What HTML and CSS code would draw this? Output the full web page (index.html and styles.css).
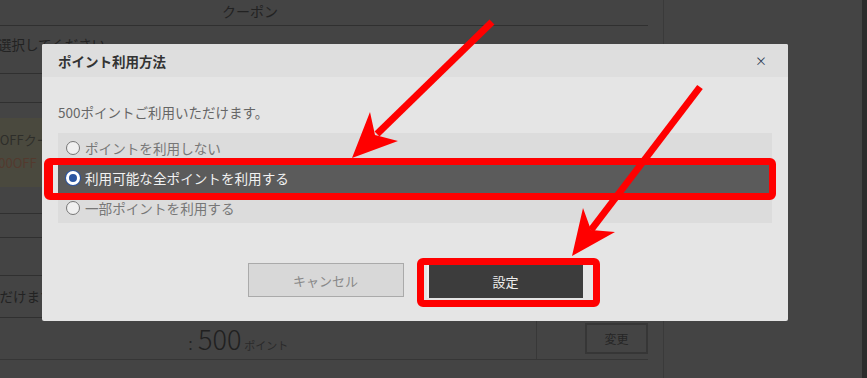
FILE: index.html
```html
<!DOCTYPE html>
<html lang="ja">
<head>
    <meta charset="UTF-8">
    <title>ポイント利用方法</title>
    <link rel="stylesheet" href="styles.css">
</head>
<body>
<div class="page">
    <div class="main">
        <div class="row row-title">クーポン</div>
        <div class="row row-select">選択してください</div>
        <div class="row row-empty"></div>
        <div class="coupon">
            <div class="coupon-name">500OFFクーポン</div>
            <div class="coupon-price">500OFF</div>
        </div>
        <div class="row row-a"></div>
        <div class="row row-b"></div>
        <div class="row row-c"></div>
        <div class="row row-note">ご利用いただけます</div>
        <div class="points">
            <div class="points-box">
                <span class="points-colon">：</span>
                <span class="points-num">500</span>
                <span class="points-unit">ポイント</span>
            </div>
            <button class="btn-change">変更</button>
        </div>
    </div>
    <div class="side"></div>
    <div class="edge"></div>
</div>

<div class="modal">
    <div class="modal-head">
        <span class="modal-title">ポイント利用方法</span>
        <span class="modal-close">×</span>
    </div>
    <div class="modal-body">
        <p class="modal-text">500ポイントご利用いただけます。</p>
        <ul class="options">
            <li class="option"><span class="radio"></span>ポイントを利用しない</li>
            <li class="option selected"><span class="radio checked"></span>利用可能な全ポイントを利用する</li>
            <li class="option"><span class="radio"></span>一部ポイントを利用する</li>
        </ul>
        <div class="buttons">
            <button class="btn btn-cancel">キャンセル</button>
            <button class="btn btn-ok">設定</button>
        </div>
    </div>
</div>

<div class="mark mark-option"></div>
<div class="mark mark-ok"></div>

<svg class="arrows" width="867" height="378" viewBox="0 0 867 378">
    <line x1="492" y1="22" x2="377" y2="134" stroke="#ff0000" stroke-width="7"/>
    <polygon points="352,158 398,141 375,135 370,112" fill="#ff0000"/>
    <line x1="700" y1="87" x2="591" y2="230" stroke="#ff0000" stroke-width="7"/>
    <polygon points="572,256 615,232 591,230 583,208" fill="#ff0000"/>
</svg>
</body>
</html>
```

FILE: styles.css
```css
body {
    margin: 0;
    font-family: "Noto Sans CJK JP", "Noto Sans", sans-serif;
    background: #444;
    overflow: hidden;
}

.page {
    display: flex;
    height: 378px;
    background: #444;
    color: #222;
    font-size: 13px;
}

.main {
    width: 648px;
    margin-right: 15px;
}

.row {
    border-bottom: 1px solid #303030;
    box-sizing: border-box;
}

.row-title {
    height: 26px;
    padding-left: 222px;
    font-size: 14px;
    line-height: 22px;
}

.row-select {
    height: 48px;
    padding-top: 8px;
    font-size: 13.5px;
    text-indent: -2px;
}

.row-empty {
    height: 29px;
    margin-bottom: 15px;
}

.coupon {
    height: 69px;
    background: #4a493e;
    padding-top: 12px;
    box-sizing: border-box;
    overflow: hidden;
    white-space: nowrap;
}

.coupon-name {
    margin-left: -22px;
    color: #2e2e2a;
}

.coupon-price {
    margin-left: -9px;
    margin-top: 4px;
    color: #533a2e;
}

.row-a {
    height: 27px;
}

.row-b {
    height: 24px;
}

.row-c {
    height: 38px;
}

.row-note {
    height: 42px;
    white-space: nowrap;
    text-indent: -68px;
    font-size: 13.5px;
    line-height: 40px;
    overflow: hidden;
}

.points {
    display: flex;
    align-items: flex-start;
    height: 41px;
    border-bottom: 1px solid #363636;
}

.points-box {
    width: 537px;
    height: 41px;
    box-sizing: border-box;
    border-right: 1px solid #383838;
    padding-left: 184px;
    display: flex;
    align-items: baseline;
    padding-top: 1px;
}

.points-colon {
    font-size: 13px;
}

.points-num {
    font-size: 27px;
    font-weight: 300;
    margin-left: 1px;
    color: #202020;
}

.points-unit {
    font-size: 11px;
    margin-left: 3px;
    color: #2a2a2a;
}

.btn-change {
    margin-left: 48px;
    margin-top: 5px;
    width: 63px;
    height: 31px;
    background: #444;
    border: 2px solid #363636;
    color: #262626;
    font-family: inherit;
    font-size: 12px;
}

.side {
    flex: 1;
    border-left: 1px solid #3a3a3a;
}

.edge {
    width: 5px;
    background: #2c2c2c;
}

.modal {
    position: absolute;
    left: 42px;
    top: 44px;
    width: 746px;
    height: 277px;
    background: #e5e5e5;
    border-radius: 2px;
    overflow: hidden;
}

.modal-head {
    height: 33px;
    background: #dedede;
    display: flex;
    align-items: center;
    justify-content: space-between;
    padding: 0 21px 0 16px;
}

.modal-title {
    font-size: 13.5px;
    font-weight: bold;
    color: #333;
}

.modal-close {
    font-size: 12px;
    color: #2b3a55;
}

.modal-body {
    padding: 25px 16px 0;
}

.modal-text {
    margin: 0;
    font-size: 13.5px;
    line-height: 20px;
    color: #666;
}

.options {
    list-style: none;
    margin: 11px 0 0;
    padding: 0;
    background: #dcdcdc;
}

.option {
    display: flex;
    align-items: center;
    height: 30px;
    padding-left: 8px;
    font-size: 13.6px;
    color: #777;
}

.option.selected {
    background: #5b5b5b;
    color: #f2f2f2;
}

.radio {
    width: 12px;
    height: 12px;
    border: 1px solid #777;
    border-radius: 50%;
    background: #f0f0f0;
    margin-right: 5px;
    box-sizing: content-box;
}

.radio.checked {
    width: 8px;
    height: 8px;
    border: 3px solid #fff;
    background: #2a55a3;
    box-shadow: 0 0 0 1px #2a55a3;
}

.buttons {
    display: flex;
    justify-content: center;
    gap: 23px;
    margin-top: 40px;
}

.btn {
    width: 156px;
    height: 34px;
    font-family: inherit;
    font-size: 13px;
}

.btn-cancel {
    background: #d8d8d8;
    border: 1px solid #aaa;
    color: #888;
}

.btn-ok {
    margin-top: 2px;
    height: 33px;
    background: #3c3c3c;
    border: none;
    border-left: 2px solid #f0f0f0;
    color: #eee;
}

.mark {
    position: absolute;
    border: 7px solid #ff0000;
    border-radius: 6px;
    box-sizing: border-box;
}

.mark-option {
    left: 44px;
    top: 158px;
    width: 732px;
    height: 42px;
    border-left-width: 9px;
}

.mark-ok {
    left: 417px;
    top: 258px;
    width: 183px;
    height: 49px;
}

.arrows {
    position: absolute;
    left: 0;
    top: 0;
}
```
